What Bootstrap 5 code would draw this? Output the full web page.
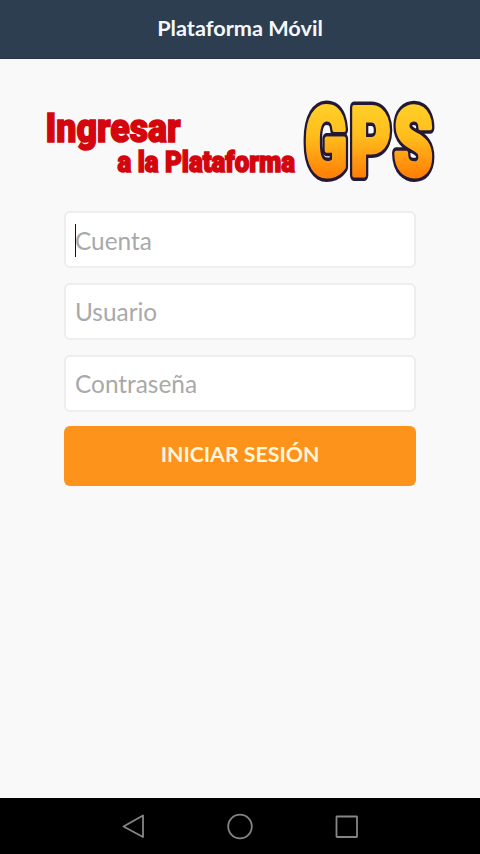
<!DOCTYPE html>
<html lang="es">
<head>
<meta charset="utf-8">
<meta name="viewport" content="width=device-width, initial-scale=1">
<title>Plataforma Móvil</title>
<link href="https://cdn.jsdelivr.net/npm/bootstrap@5.3.0/dist/css/bootstrap.min.css" rel="stylesheet">
<style>
body{font-family:Lato,"Liberation Sans",sans-serif;background:#f9f9f9;height:854px;overflow:hidden}
.top-bar{height:59px;background:#2d3e50;border-bottom:1px solid #253545;color:#f4f8fc;font-size:21.7px;font-weight:700;line-height:33px;padding-bottom:2px}
.logo{width:400px;height:90px;margin:37px 0 0 40px}
.login{width:352px;margin:25px auto 0;gap:15px}
.field-box{height:57px;border:2px solid #eee;border-radius:6px;padding:0 9px;font-size:24.4px;background:#fff;color:#222;box-shadow:none!important}
.field-first{padding-top:1px}
.field-box::placeholder{color:#a9a9a9;opacity:1}
.caret{left:11px;top:13px;width:1px;height:33px;background:#111}
.btn-enter{height:60px;margin-top:-1px;background:#fd931b;border:0;border-radius:6px;color:#fff6dc;font-size:21.3px;font-weight:700;padding:0 0 2px}
.nav-keys{height:56px;background:#000}
</style>
<script src="https://cdn.jsdelivr.net/npm/bootstrap@5.3.0/dist/js/bootstrap.bundle.min.js"></script>
</head>
<body class="d-flex flex-column m-0">
<header class="top-bar d-flex align-items-center justify-content-center flex-shrink-0">Plataforma Móvil</header>
<main class="flex-grow-1">
<svg class="logo d-block overflow-visible" viewBox="40 96 400 90" role="img" aria-label="Ingresar a la Plataforma GPS">
<defs><linearGradient id="gold" gradientUnits="userSpaceOnUse" x1="0" y1="-70" x2="0" y2="0"><stop offset="0" stop-color="#ffd028"/><stop offset=".45" stop-color="#ffbd1c"/><stop offset="1" stop-color="#ff8108"/></linearGradient></defs>
<g font-family="Roboto,sans-serif" font-weight="900" fill="#d3060e" stroke="#d3060e" stroke-width="1.6">
<text x="45.500" y="141.500" font-size="40.500" textLength="135" lengthAdjust="spacingAndGlyphs">Ingresar</text>
<text x="117.500" y="171.500" font-size="29.500" textLength="177.500" lengthAdjust="spacingAndGlyphs">a la Plataforma</text>
</g>
<g font-family="Roboto,sans-serif" font-weight="900" font-size="95" stroke-linejoin="round" transform="translate(305 175) scale(.65 1)">
<text x="0 70 137" y="0" fill="#231937" stroke="#231937" stroke-width="12">GPS</text>
<text x="0 70 137" y="0" fill="url(#gold)" stroke="url(#gold)" stroke-width="5">GPS</text>
</g>
</svg>
<form class="login d-flex flex-column">
<div class="position-relative"><input class="form-control field-box field-first" placeholder="Cuenta" aria-label="Cuenta"><span class="caret position-absolute"></span></div>
<input class="form-control field-box" placeholder="Usuario" aria-label="Usuario">
<input class="form-control field-box" type="password" placeholder="Contraseña" aria-label="Contraseña">
<button class="btn btn-enter w-100" type="button">INICIAR SESIÓN</button>
</form>
</main>
<footer class="nav-keys flex-shrink-0">
<svg class="d-block" width="480" height="56" fill="none" stroke="#858585" stroke-width="1.8" stroke-linejoin="round"><path d="M123.500 28.500 143 17.500V39Z"/><circle cx="240" cy="28.500" r="11.800"/><rect x="336.500" y="18.500" width="20.500" height="20.500" rx=".5"/></svg>
</footer>
</body>
</html>
